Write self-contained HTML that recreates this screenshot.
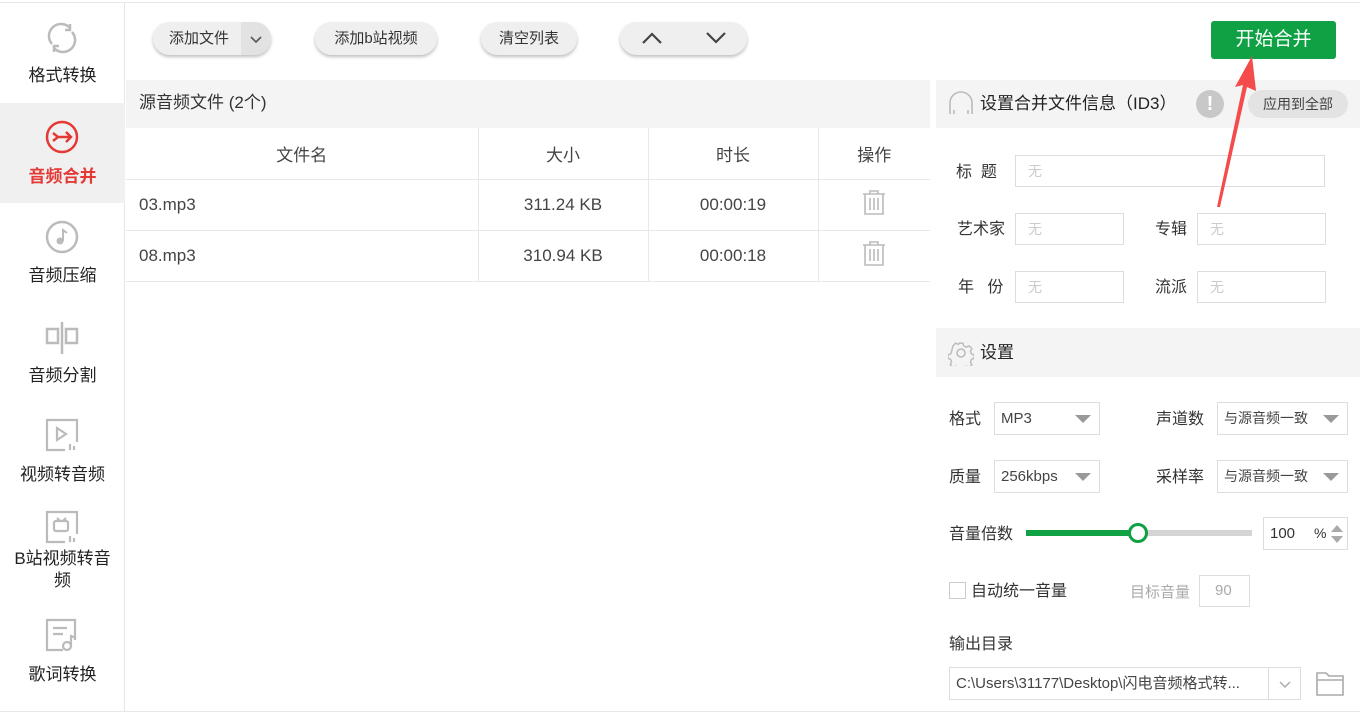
<!DOCTYPE html>
<html><head><meta charset="utf-8"><style>
*{box-sizing:border-box;margin:0;padding:0}
body{width:1360px;height:715px;background:#fff;font-family:"Liberation Sans","Noto Sans CJK SC",sans-serif;color:#333;position:relative;overflow:hidden;font-size:16px}
.a{position:absolute}
.side{left:0;top:3px;width:125px;height:709px;border-right:1px solid #e6e6e6}
.nav{position:absolute;left:0;width:125px;text-align:center;font-size:17px;color:#222}
.btn{position:absolute;top:22px;height:33px;border-radius:17px;background:#efefef;box-shadow:0 2px 3px rgba(0,0,0,.25);font-size:15px;color:#333;line-height:33px;text-align:center}
.inp{position:absolute;border:1px solid #ddd;height:32px;font-size:14px;color:#ccc;line-height:30px;padding-left:12px}
.lbl{position:absolute;font-size:16px;color:#333;line-height:20px}
.sel{position:absolute;border:1px solid #ddd;height:33px;font-size:15px;color:#444;line-height:31px;padding-left:6px}
.tri{position:absolute;right:8px;top:12px;border-left:8px solid transparent;border-right:8px solid transparent;border-top:8px solid #999}
td{border-right:1px solid #e8e8e8;border-bottom:1px solid #e8e8e8;height:51px;font-size:17px;color:#444}
</style></head><body>
<div class="a" style="left:0;top:2px;width:1360px;border-top:1px solid #e8e8e8"></div>
<div class="a" style="left:0;top:711px;width:1360px;border-top:1px solid #e8e8e8"></div>
<div class="a side"></div>
<div class="a" style="left:0;top:103px;width:125px;height:100px;background:#f0f0f0"></div>
<svg class="a" style="left:44px;top:20px" width="36" height="36" viewBox="0 0 36 36" fill="none" stroke="#bbb" stroke-width="2.5"><path d="M8 24A12 12 0 0 1 26 8"/><path d="M28 12A12 12 0 0 1 10 28"/><path d="M26 4v6h-5M10 32v-6h5"/></svg>
<div class="nav" style="top:61px">格式转换</div>
<svg class="a" style="left:45px;top:120px" width="34" height="34" viewBox="0 0 34 34" fill="none" stroke="#e53935" stroke-width="2.5"><circle cx="17" cy="17" r="15"/><path d="M8 13l5 4h12M21 12l5 5-5 5M8 21l5-4"/></svg>
<div class="nav" style="top:162px;color:#e53935;font-weight:bold">音频合并</div>
<svg class="a" style="left:45px;top:220px" width="34" height="34" viewBox="0 0 34 34"><circle cx="17" cy="17" r="15" fill="none" stroke="#bbb" stroke-width="2.5"/><circle cx="15" cy="21" r="3.5" fill="#bbb"/><path d="M18 21V10l4 3" fill="none" stroke="#bbb" stroke-width="2"/></svg>
<div class="nav" style="top:261px">音频压缩</div>
<svg class="a" style="left:45px;top:320px" width="34" height="36" viewBox="0 0 34 36" fill="none" stroke="#bbb" stroke-width="2.5"><rect x="2" y="9" width="11" height="14"/><rect x="21" y="9" width="11" height="14"/><path d="M17 2v32"/></svg>
<div class="nav" style="top:361px">音频分割</div>
<svg class="a" style="left:45px;top:418px" width="34" height="36" viewBox="0 0 34 36" fill="none" stroke="#bbb" stroke-width="2.2"><path d="M20 32H2V2h30v22"/><path d="M12 10l9 6-9 6z"/><path d="M25 26v6M29 28v4"/></svg>
<div class="nav" style="top:460px">视频转音频</div>
<svg class="a" style="left:45px;top:510px" width="34" height="36" viewBox="0 0 34 36" fill="none" stroke="#bbb" stroke-width="2.2"><path d="M20 32H2V2h30v22"/><rect x="9" y="11" width="14" height="10" rx="2"/><path d="M12 8l3 3M21 8l-3 3"/><path d="M25 26v6M29 28v4"/></svg>
<div class="nav" style="top:548px;line-height:22px">B站视频转音<br>频</div>
<svg class="a" style="left:45px;top:618px" width="34" height="36" viewBox="0 0 34 36" fill="none" stroke="#bbb" stroke-width="2.2"><path d="M18 32H2V2h28v20"/><path d="M8 10h14M8 16h10"/><circle cx="22" cy="28" r="4"/><path d="M26 28V18l5 2"/></svg>
<div class="nav" style="top:660px">歌词转换</div>

<div class="btn" style="left:153px;width:118px;text-align:left;padding-left:16px">添加文件<span style="position:absolute;right:0;top:0;width:30px;height:33px;background:#e2e2e2;border-radius:0 17px 17px 0;text-align:center"><svg width="30" height="33" fill="none" stroke="#555" stroke-width="1.6"><path d="M10 15l5 5 5-5"/></svg></span></div>
<div class="btn" style="left:315px;width:122px">添加b站视频</div>
<div class="btn" style="left:481px;width:96px">清空列表</div>
<div class="btn" style="left:620px;width:127px"><svg width="127" height="33" fill="none" stroke="#444" stroke-width="2.2"><path d="M23 21l9-9 9 9M87 11l9 9 9-9"/></svg></div>

<div class="a" style="left:126px;top:80px;width:804px;height:48px;background:#f4f4f4;font-size:17px;line-height:46px;padding-left:13px">源音频文件 (2个)</div>
<table class="a" style="left:126px;top:128px;border-collapse:collapse;width:804px">
<tr style="text-align:center"><td style="width:352px">文件名</td><td style="width:170px">大小</td><td style="width:170px">时长</td><td style="width:112px;border-right:none">操作</td></tr>
<tr><td style="padding-left:13px">03.mp3</td><td style="text-align:center">311.24 KB</td><td style="text-align:center">00:00:19</td><td style="border-right:none;text-align:center"><svg width="24" height="26" fill="none" stroke="#bbb" stroke-width="1.6"><path d="M1 5h22M8 5V2h8v3M3 5v20h18V5M8 9v12M12 9v12M16 9v12"/></svg></td></tr>
<tr><td style="padding-left:13px">08.mp3</td><td style="text-align:center">310.94 KB</td><td style="text-align:center">00:00:18</td><td style="border-right:none;text-align:center"><svg width="24" height="26" fill="none" stroke="#bbb" stroke-width="1.6"><path d="M1 5h22M8 5V2h8v3M3 5v20h18V5M8 9v12M12 9v12M16 9v12"/></svg></td></tr>
</table>

<div class="a" style="left:1211px;top:21px;width:125px;height:38px;background:#0fa144;border-radius:3px;color:#fff;font-size:19px;line-height:38px;text-align:center">开始合并</div>

<div class="a" style="left:936px;top:80px;width:424px;height:48px;background:#f4f4f4"></div>
<svg class="a" style="left:948px;top:90px" width="26" height="26" fill="none" stroke="#bbb" stroke-width="1.6"><path d="M2 24V13a11 11 0 0 1 22 0v11M6 20v4M20 20v4"/></svg>
<div class="lbl" style="left:980px;top:94px;font-size:17px;color:#222">设置合并文件信息（ID3）</div>
<div class="a" style="left:1196px;top:90px;width:28px;height:28px;border-radius:50%;background:#c8c8c8;color:#fff;font-weight:bold;text-align:center;line-height:28px;font-size:20px">!</div>
<div class="a" style="left:1248px;top:90px;width:100px;height:28px;border-radius:14px;background:#e3e3e3;font-size:14px;line-height:28px;text-align:center;color:#444">应用到全部</div>

<div class="lbl" style="left:956px;top:163px">标&nbsp;&nbsp;题</div>
<div class="inp" style="left:1015px;top:155px;width:310px">无</div>
<div class="lbl" style="left:957px;top:220px">艺术家</div>
<div class="inp" style="left:1015px;top:213px;width:109px">无</div>
<div class="lbl" style="left:1155px;top:220px">专辑</div>
<div class="inp" style="left:1197px;top:213px;width:129px">无</div>
<div class="lbl" style="left:958px;top:278px">年&nbsp;&nbsp;&nbsp;份</div>
<div class="inp" style="left:1015px;top:271px;width:109px">无</div>
<div class="lbl" style="left:1155px;top:278px">流派</div>
<div class="inp" style="left:1197px;top:271px;width:129px">无</div>

<div class="a" style="left:936px;top:328px;width:424px;height:49px;background:#f4f4f4"></div>
<svg class="a" style="left:948px;top:340px" width="26" height="26" viewBox="0 0 26 26" fill="none" stroke="#bbb" stroke-width="1.6"><path d="M11 2h4l1 3 3 1.5 3-1.5 3 3-1.5 3 1 3 3 1v4l-3 1-1 3 1.5 3-3 3-3-1.5-3 1-1 3h-4l-1-3-3-1-3 1.5-3-3 1.5-3-1-3-3-1v-4l3-1 1-3L4 5 7 2l3 1.5z" transform="scale(.9) translate(1.5 1.5)"/><circle cx="13" cy="13" r="4"/></svg>
<div class="lbl" style="left:980px;top:343px;font-size:17px;color:#222">设置</div>

<div class="lbl" style="left:949px;top:410px">格式</div>
<div class="sel" style="left:994px;top:402px;width:106px">MP3<div class="tri"></div></div>
<div class="lbl" style="left:1156px;top:410px">声道数</div>
<div class="sel" style="left:1217px;top:402px;width:131px;font-size:14px">与源音频一致<div class="tri"></div></div>
<div class="lbl" style="left:949px;top:468px">质量</div>
<div class="sel" style="left:994px;top:460px;width:106px">256kbps<div class="tri"></div></div>
<div class="lbl" style="left:1156px;top:468px">采样率</div>
<div class="sel" style="left:1217px;top:460px;width:131px;font-size:14px">与源音频一致<div class="tri"></div></div>

<div class="lbl" style="left:949px;top:525px">音量倍数</div>
<div class="a" style="left:1026px;top:530px;width:226px;height:6px;background:#d4d4d4"></div>
<div class="a" style="left:1026px;top:530px;width:112px;height:6px;background:#0fa144"></div>
<div class="a" style="left:1128px;top:523px;width:20px;height:20px;border-radius:50%;border:3px solid #0fa144;background:#fff"></div>
<div class="sel" style="left:1263px;top:517px;width:85px;color:#333">100<span style="position:absolute;left:50px;font-size:14px">%</span><svg style="position:absolute;right:4px;top:6px" width="12" height="20"><path d="M0 8l6-7 6 7zM0 12l6 7 6-7z" fill="#aaa"/></svg></div>

<div class="a" style="left:949px;top:582px;width:17px;height:17px;border:1px solid #ccc"></div>
<div class="lbl" style="left:971px;top:582px">自动统一音量</div>
<div class="lbl" style="left:1130px;top:583px;color:#aaa;font-size:15px">目标音量</div>
<div class="inp" style="left:1199px;top:575px;width:51px;color:#aaa;font-size:15px;padding-left:15px">90</div>

<div class="lbl" style="left:949px;top:635px">输出目录</div>
<div class="sel" style="left:949px;top:667px;width:352px;font-size:15px;color:#444">C:\Users\31177\Desktop\闪电音频格式转...<div style="position:absolute;right:0;top:0;width:32px;height:31px;border-left:1px solid #ddd"><svg width="32" height="31" fill="none" stroke="#aaa" stroke-width="1.4"><path d="M11 14l5 5 5-5"/></svg></div></div>
<svg class="a" style="left:1316px;top:670px" width="28" height="26" fill="none" stroke="#aaa" stroke-width="1.6"><path d="M1 3h9l3 3h14v19H1zM1 10h26"/></svg>

<svg class="a" style="left:1210px;top:50px" width="50" height="165"><polygon points="42,6 25,37 33,35 7,157 10,157 37,37 46,41" fill="#f44b4b"/></svg>
</body></html>
